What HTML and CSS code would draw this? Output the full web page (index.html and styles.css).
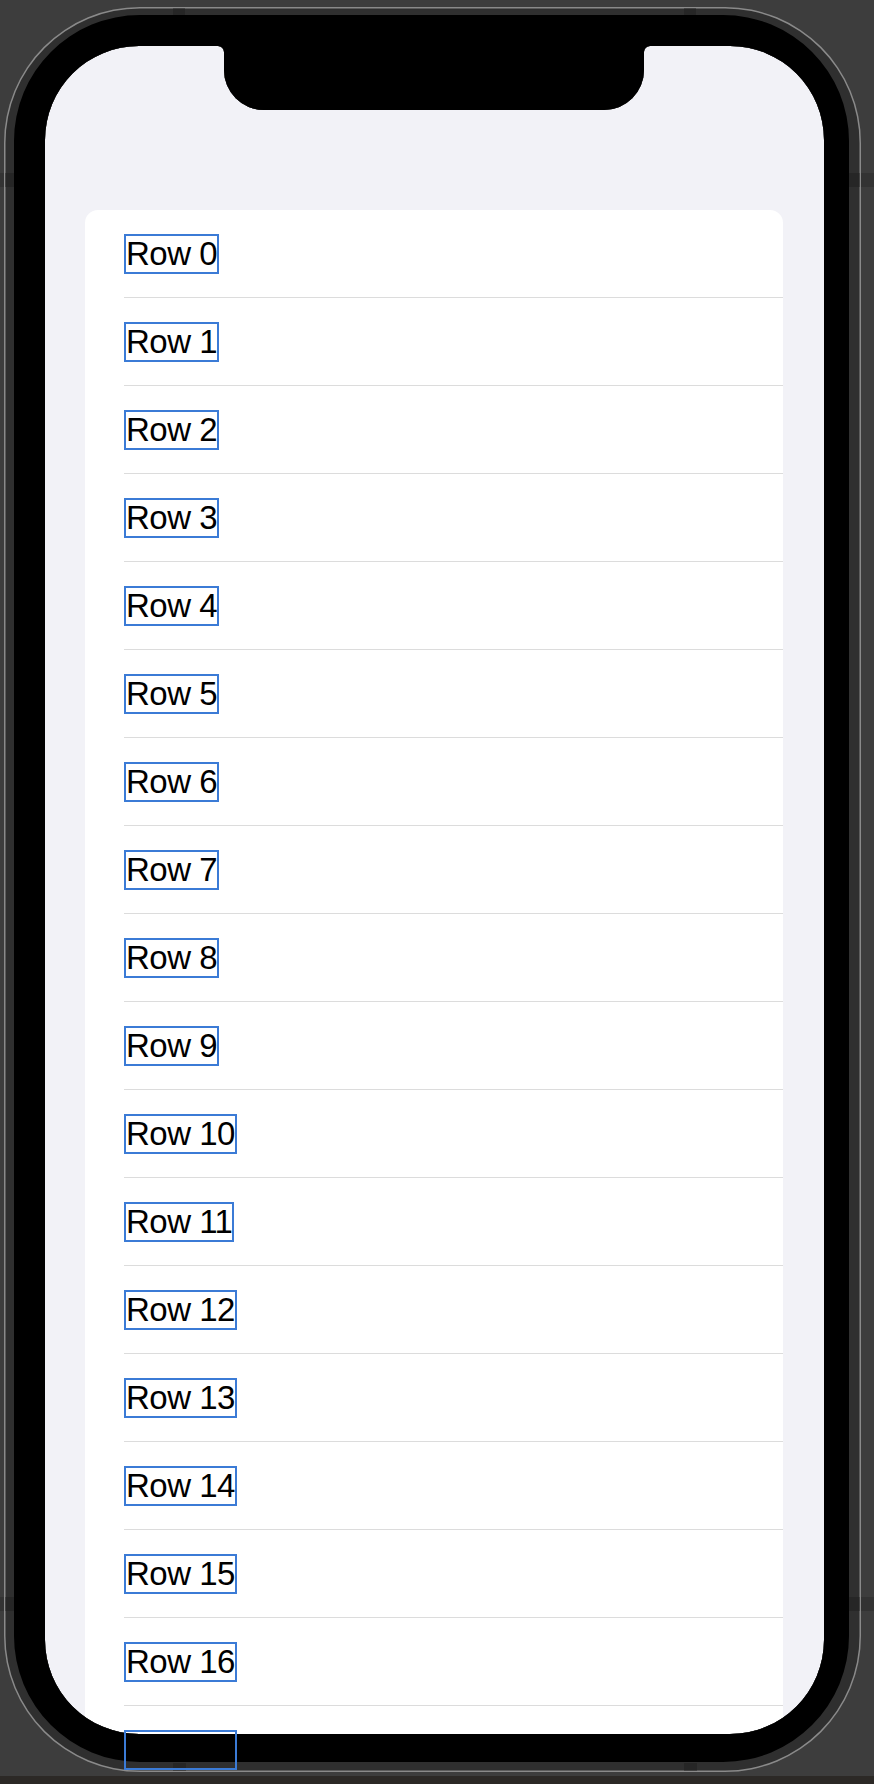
FILE: index.html
```html
<!DOCTYPE html>
<html>
<head>
<meta charset="utf-8">
<link rel="stylesheet" href="styles.css">
</head>
<body>
<div class="screen">
  <div class="card">
    <div class="row"><div class="cell"><span class="label">Row 0</span></div></div>
    <div class="row"><div class="cell"><span class="label">Row 1</span></div></div>
    <div class="row"><div class="cell"><span class="label">Row 2</span></div></div>
    <div class="row"><div class="cell"><span class="label">Row 3</span></div></div>
    <div class="row"><div class="cell"><span class="label">Row 4</span></div></div>
    <div class="row"><div class="cell"><span class="label">Row 5</span></div></div>
    <div class="row"><div class="cell"><span class="label">Row 6</span></div></div>
    <div class="row"><div class="cell"><span class="label">Row 7</span></div></div>
    <div class="row"><div class="cell"><span class="label">Row 8</span></div></div>
    <div class="row"><div class="cell"><span class="label">Row 9</span></div></div>
    <div class="row"><div class="cell"><span class="label">Row 10</span></div></div>
    <div class="row"><div class="cell"><span class="label">Row 11</span></div></div>
    <div class="row"><div class="cell"><span class="label">Row 12</span></div></div>
    <div class="row"><div class="cell"><span class="label">Row 13</span></div></div>
    <div class="row"><div class="cell"><span class="label">Row 14</span></div></div>
    <div class="row"><div class="cell"><span class="label">Row 15</span></div></div>
    <div class="row"><div class="cell"><span class="label">Row 16</span></div></div>
    <div class="row"><div class="cell"><span class="label">Row 17</span></div></div>
  </div>
</div>
<svg class="bezel" width="874" height="1784" viewBox="0 0 874 1784" xmlns="http://www.w3.org/2000/svg">
  <path fill="#3d3d3d" fill-rule="evenodd" d="M0 0 H874 V1784 H0 Z M139 46 H218 A6 6 0 0 1 224 52 V70 A40 40 0 0 0 264 110 H604 A40 40 0 0 0 644 70 V52 A6 6 0 0 1 650 46 H730 A94 94 0 0 1 824 140 V1640 A94 94 0 0 1 730 1734 H139 A94 94 0 0 1 45 1640 V140 A94 94 0 0 1 139 46 Z"/>
  <rect x="0" y="1776" width="874" height="8" fill="#2c2926"/>
  <rect x="0" y="173" width="5" height="14" fill="#333333"/>
  <rect x="861" y="173" width="13" height="14" fill="#333333"/>
  <rect x="0" y="1597" width="5" height="14" fill="#333333"/>
  <rect x="861" y="1597" width="13" height="14" fill="#333333"/>
  <path fill="#8a8a8a" fill-rule="evenodd" d="M140 7 H725 A136 136 0 0 1 861 143 V1636 A136 136 0 0 1 725 1772 H140 A136 136 0 0 1 4 1636 V143 A136 136 0 0 1 140 7 Z M139 46 H218 A6 6 0 0 1 224 52 V70 A40 40 0 0 0 264 110 H604 A40 40 0 0 0 644 70 V52 A6 6 0 0 1 650 46 H730 A94 94 0 0 1 824 140 V1640 A94 94 0 0 1 730 1734 H139 A94 94 0 0 1 45 1640 V140 A94 94 0 0 1 139 46 Z"/>
  <path fill="#2f2f2f" fill-rule="evenodd" d="M140 8.5 H725 A134.5 134.5 0 0 1 859.5 143 V1636 A134.5 134.5 0 0 1 725 1770.5 H140 A134.5 134.5 0 0 1 5.5 1636 V143 A134.5 134.5 0 0 1 140 8.5 Z M139 46 H218 A6 6 0 0 1 224 52 V70 A40 40 0 0 0 264 110 H604 A40 40 0 0 0 644 70 V52 A6 6 0 0 1 650 46 H730 A94 94 0 0 1 824 140 V1640 A94 94 0 0 1 730 1734 H139 A94 94 0 0 1 45 1640 V140 A94 94 0 0 1 139 46 Z"/>
  <rect x="173" y="8.5" width="12" height="7" fill="#262626"/>
  <rect x="684" y="8.5" width="12" height="7" fill="#262626"/>
  <rect x="173" y="1763" width="13" height="7.5" fill="#262626"/>
  <rect x="684" y="1763" width="13" height="7.5" fill="#262626"/>
  <rect x="5.5" y="173" width="8.5" height="14" fill="#262626"/>
  <rect x="849" y="173" width="10.5" height="14" fill="#262626"/>
  <rect x="5.5" y="1597" width="8.5" height="14" fill="#262626"/>
  <rect x="849" y="1597" width="10.5" height="14" fill="#262626"/>
  <path fill="#000000" fill-rule="evenodd" d="M140 15 H723 A126 126 0 0 1 849 141 V1636 A126 126 0 0 1 723 1762 H140 A126 126 0 0 1 14 1636 V141 A126 126 0 0 1 140 15 Z M139 46 H218 A6 6 0 0 1 224 52 V70 A40 40 0 0 0 264 110 H604 A40 40 0 0 0 644 70 V52 A6 6 0 0 1 650 46 H730 A94 94 0 0 1 824 140 V1640 A94 94 0 0 1 730 1734 H139 A94 94 0 0 1 45 1640 V140 A94 94 0 0 1 139 46 Z"/>
</svg>
</body>
</html>
```
FILE: styles.css
```css
html, body {
  margin: 0;
  height: 1784px;
  overflow: hidden;
}

body {
  position: relative;
  width: 874px;
  box-sizing: border-box;
  padding: 46px 0 0 45px;
  background: #3d3d3d;
  font-family: "Liberation Sans", Arial, sans-serif;
}

.screen {
  width: 779px;
  height: 1688px;
  box-sizing: border-box;
  padding-top: 164px;
  background: #f2f2f7;
}

.card {
  margin-left: 40px;
  width: 698px;
  background: #ffffff;
  border-radius: 13px 13px 0 0;
}

.row {
  padding-left: 39px;
}

.cell {
  height: 87px;
  border-bottom: 1px solid #dcdcdc;
  display: flex;
  align-items: center;
}

.label {
  position: relative;
  display: inline-block;
  margin-left: 2px;
  font-size: 33px;
  line-height: 36px;
  letter-spacing: -0.5px;
  color: #000000;
}

.label::after {
  content: "";
  position: absolute;
  top: -2px;
  left: -2px;
  right: -2px;
  bottom: -2px;
  border: 2px solid #3b7bd6;
  z-index: 3;
}

.bezel {
  position: absolute;
  left: 0;
  top: 0;
  z-index: 2;
}
```
